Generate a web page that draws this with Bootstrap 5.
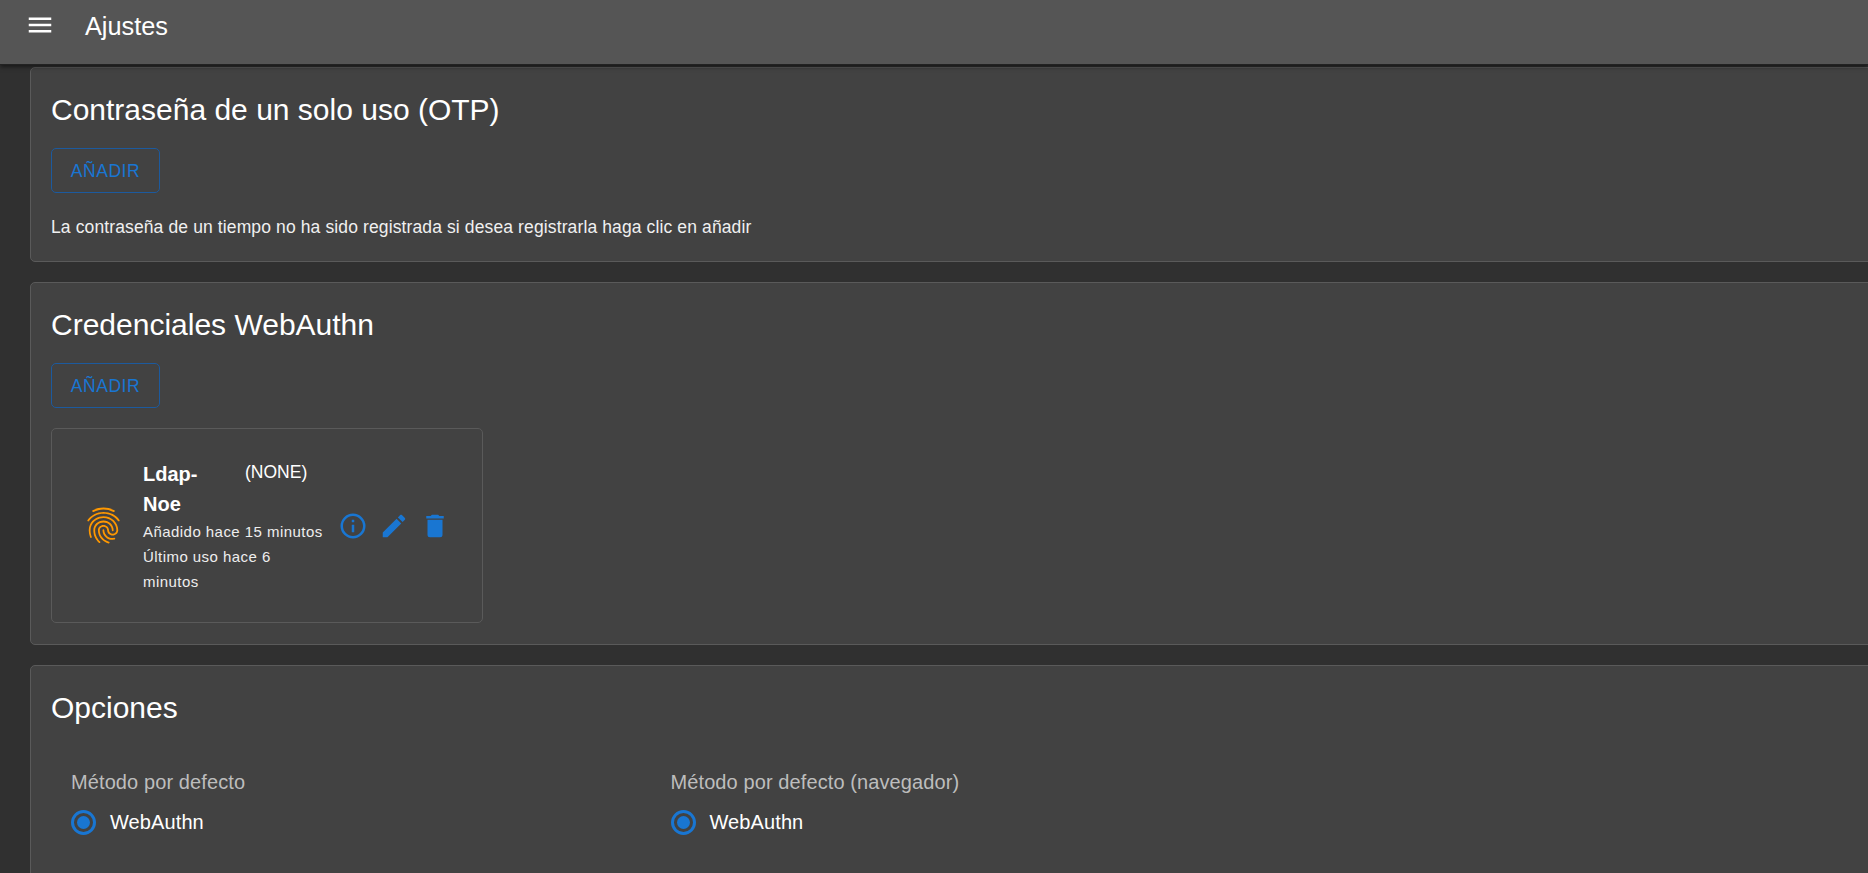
<!DOCTYPE html>
<html lang="es">
<head>
  <meta charset="UTF-8"/>
  <meta name="viewport" content="width=device-width, initial-scale=1.0"/>
  <title>Ajustes</title>
  <link href="https://cdn.jsdelivr.net/npm/bootstrap@5.3.0/dist/css/bootstrap.min.css" rel="stylesheet"/>
  <style>
    html, body { height: 100%; overflow: hidden; }
    body { background: #303030; color: #fff; font-family: "Liberation Sans", Arial, sans-serif; }
    .topbar { height: 65px; background: #555; padding-left: 25px; box-shadow: 0 2px 4px rgba(0,0,0,.5); position: relative; z-index: 2; border-bottom: 1px solid #222; }
    .topbar svg { width: 30px; height: 30px; margin-top: 10px; }
    .topbar h1 { font-size: 25.3px; font-weight: 400; margin: 11px 0 0 30px; line-height: 30px; }
    .content { margin-left: 30px; padding-top: 2px; height: calc(100vh - 65px); overflow: hidden; }
    .panel { background: #424242; border: 1px solid #5a5a5a; border-radius: 5px; padding: 22px 20px; margin: 0 -12px 20px 0; }
    .panel h2 { font-size: 30px; font-weight: 400; line-height: 40px; margin: 0 0 18px; }
    .btn-add { height: 45px; width: 109px; border: 1px solid #1c5a9e; border-radius: 5px; color: #1976d2; background: none; font-size: 17.5px; letter-spacing: .55px; padding: 1px 0 0; }
    .panel p { font-size: 17.5px; letter-spacing: .12px; color: #f0f0f0; margin: 22px 0 -1px; line-height: 25px; }
    .cred { width: 432px; height: 195px; border: 1px solid #5a5a5a; border-radius: 5px; margin: 20px 0 -1px; }
    .cred .fp { width: 43px; height: 43px; margin-left: 30px; }
    .cred .info { width: 180px; margin-left: 18px; padding-top: 1px; }
    .cred .name { font-size: 20px; font-weight: 700; line-height: 30px; width: 72px; }
    .cred .none { font-size: 17.5px; line-height: 25px; margin: 1px 0 0 30px; }
    .cred small { display: block; font-size: 15px; line-height: 25px; letter-spacing: .45px; color: #eee; }
    .cred .act svg { width: 30px; height: 30px; }
    .cred .act { gap: 11px; margin-left: 15px; }
    .panel-opts { padding-bottom: 70px; }
    .opt-row { margin-top: 40px; }
    .field-label { font-size: 20px; letter-spacing: .1px; color: #bdbdbd; line-height: 28px; }
    .radio-row { margin-top: 11px; gap: 14px; }
    .radio { width: 25px; height: 25px; border: 3px solid #1976d2; border-radius: 50%; padding: 3px; }
    .radio i { display: block; width: 100%; height: 100%; border-radius: 50%; background: #1976d2; }
    .radio-label { font-size: 20px; letter-spacing: .1px; }
    .opt-col { width: 599.5px; padding-left: 20px; }
  </style>
</head>
<body>
  <header class="topbar d-flex align-items-start">
    <svg viewBox="0 0 24 24" fill="#fff"><path d="M3,6H21V8H3V6M3,11H21V13H3V11M3,16H21V18H3V16Z"/></svg>
    <h1>Ajustes</h1>
  </header>
  <main class="content">
    <section class="panel">
      <h2>Contraseña de un solo uso (OTP)</h2>
      <button class="btn btn-add">AÑADIR</button>
      <p>La contraseña de un tiempo no ha sido registrada si desea registrarla haga clic en añadir</p>
    </section>
    <section class="panel">
      <h2>Credenciales WebAuthn</h2>
      <button class="btn btn-add">AÑADIR</button>
      <div class="cred d-flex align-items-center">
        <svg class="fp" viewBox="0 0 24 24" fill="#ff9800"><path d="M17.81,4.47C17.73,4.47 17.65,4.45 17.58,4.41C15.66,3.42 14,3 12,3C10.03,3 8.15,3.47 6.44,4.41C6.2,4.54 5.9,4.45 5.76,4.21C5.63,3.97 5.72,3.66 5.96,3.53C7.82,2.5 9.86,2 12,2C14.14,2 16,2.47 18.04,3.5C18.29,3.65 18.38,3.95 18.25,4.19C18.16,4.37 18,4.47 17.81,4.47M3.5,9.72C3.4,9.72 3.3,9.69 3.21,9.63C3,9.47 2.93,9.16 3.09,8.93C4.08,7.53 5.34,6.43 6.84,5.66C10,4.04 14,4.03 17.15,5.65C18.65,6.42 19.91,7.5 20.9,8.9C21.06,9.12 21,9.44 20.78,9.6C20.55,9.76 20.24,9.71 20.08,9.5C19.18,8.22 18.04,7.23 16.69,6.54C13.82,5.07 10.15,5.07 7.29,6.55C5.93,7.25 4.79,8.25 3.89,9.5C3.81,9.65 3.66,9.72 3.5,9.72M9.75,21.79C9.62,21.79 9.5,21.74 9.4,21.64C8.53,20.77 8.06,20.21 7.39,19C6.7,17.77 6.34,16.27 6.34,14.66C6.34,11.69 8.88,9.27 12,9.27C15.12,9.27 17.66,11.69 17.66,14.66A0.5,0.5 0 0,1 17.16,15.16A0.5,0.5 0 0,1 16.66,14.66C16.66,12.24 14.57,10.27 12,10.27C9.43,10.27 7.34,12.24 7.34,14.66C7.34,16.1 7.66,17.43 8.27,18.5C8.91,19.66 9.35,20.15 10.12,20.93C10.31,21.13 10.31,21.44 10.12,21.64C10,21.74 9.88,21.79 9.75,21.79M16.92,19.94C15.73,19.94 14.68,19.64 13.82,19.05C12.33,18.04 11.44,16.4 11.44,14.66A0.5,0.5 0 0,1 11.94,14.16A0.5,0.5 0 0,1 12.44,14.66C12.44,16.07 13.16,17.4 14.38,18.22C15.09,18.7 15.92,18.93 16.92,18.93C17.16,18.93 17.56,18.9 17.96,18.83C18.23,18.78 18.5,18.96 18.54,19.24C18.59,19.5 18.41,19.77 18.13,19.82C17.56,19.93 17.06,19.94 16.92,19.94M14.91,22C14.87,22 14.82,22 14.78,22C13.19,21.54 12.15,20.95 11.06,19.88C9.66,18.5 8.89,16.64 8.89,14.66C8.89,13.04 10.27,11.72 11.97,11.72C13.67,11.72 15.05,13.04 15.05,14.66C15.05,15.73 16,16.6 17.13,16.6C18.28,16.6 19.21,15.73 19.21,14.66C19.21,10.89 15.96,7.83 11.96,7.83C9.12,7.83 6.5,9.41 5.35,11.86C4.96,12.67 4.76,13.62 4.76,14.66C4.76,15.44 4.83,16.67 5.43,18.27C5.53,18.53 5.4,18.82 5.14,18.91C4.88,19 4.59,18.87 4.5,18.62C4,17.31 3.77,16 3.77,14.66C3.77,13.46 4,12.37 4.45,11.42C5.78,8.63 8.73,6.82 11.96,6.82C16.5,6.82 20.21,10.33 20.21,14.65C20.21,16.27 18.83,17.59 17.13,17.59C15.43,17.59 14.05,16.27 14.05,14.65C14.05,13.58 13.12,12.71 11.97,12.71C10.82,12.71 9.89,13.58 9.89,14.65C9.89,16.36 10.55,17.96 11.76,19.16C12.71,20.1 13.62,20.62 15.03,21C15.3,21.08 15.45,21.36 15.38,21.62C15.33,21.85 15.12,22 14.91,22Z"/></svg>
        <div class="info">
          <div class="d-flex align-items-start">
            <div class="name">Ldap-Noe</div>
            <div class="none">(NONE)</div>
          </div>
          <small>Añadido hace 15 minutos</small>
          <small>Último uso hace 6 minutos</small>
        </div>
        <div class="act d-flex">
          <svg viewBox="0 0 24 24" fill="#1976d2"><path d="M11,9H13V7H11M12,20C7.59,20 4,16.41 4,12C4,7.59 7.59,4 12,4C16.41,4 20,7.59 20,12C20,16.41 16.41,20 12,20M12,2A10,10 0 0,0 2,12A10,10 0 0,0 12,22A10,10 0 0,0 22,12A10,10 0 0,0 12,2M11,17H13V11H11V17Z"/></svg>
          <svg viewBox="0 0 24 24" fill="#1976d2"><path d="M20.71,7.04C21.1,6.65 21.1,6 20.71,5.63L18.37,3.29C18,2.9 17.35,2.9 16.96,3.29L15.12,5.12L18.87,8.87M3,17.25V21H6.75L17.81,9.93L14.06,6.18L3,17.25Z"/></svg>
          <svg viewBox="0 0 24 24" fill="#1976d2"><path d="M19,4H15.5L14.5,3H9.5L8.5,4H5V6H19M6,19A2,2 0 0,0 8,21H16A2,2 0 0,0 18,19V7H6V19Z"/></svg>
        </div>
      </div>
    </section>
    <section class="panel panel-opts">
      <h2>Opciones</h2>
      <div class="d-flex opt-row">
        <div class="opt-col">
          <div class="field-label">Método por defecto</div>
          <div class="d-flex align-items-center radio-row"><span class="radio"><i></i></span><span class="radio-label">WebAuthn</span></div>
        </div>
        <div class="opt-col">
          <div class="field-label">Método por defecto (navegador)</div>
          <div class="d-flex align-items-center radio-row"><span class="radio"><i></i></span><span class="radio-label">WebAuthn</span></div>
        </div>
      </div>
    </section>
  </main>
  <script src="https://cdn.jsdelivr.net/npm/bootstrap@5.3.0/dist/js/bootstrap.bundle.min.js"></script>
</body>
</html>
